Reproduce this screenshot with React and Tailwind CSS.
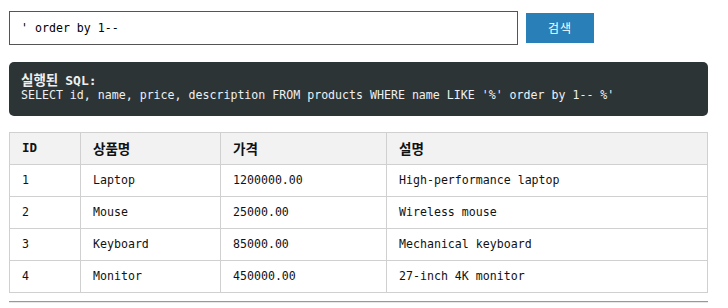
import React, { useState } from 'react';

// Product rows shown in the result table
const products = [
  { id: 1, name: 'Laptop', price: '1200000.00', description: 'High-performance laptop' },
  { id: 2, name: 'Mouse', price: '25000.00', description: 'Wireless mouse' },
  { id: 3, name: 'Keyboard', price: '85000.00', description: 'Mechanical keyboard' },
  { id: 4, name: 'Monitor', price: '450000.00', description: '27-inch 4K monitor' },
];

const mono = "font-['DejaVu_Sans_Mono','Noto_Sans_CJK_KR',monospace] text-[11.6px]";
const kr = "font-['Noto_Sans_CJK_KR',sans-serif]";

const App = () => {
  const [query, setQuery] = useState("' order by 1-- ");

  return (
    <div className="w-[728px] h-[308px] bg-white overflow-hidden pl-[9px] pt-[11px] text-[#111]">
      {/* Search bar */}
      <div className="flex items-center gap-2">
        <input
          value={query}
          onChange={(e) => setQuery(e.target.value)}
          className={`w-[509px] h-[34px] border border-[#555] px-[11px] outline-none text-black ${mono}`}
        />
        <button className={`w-[68px] h-[30px] bg-[#2980b9] text-white text-[12px] tracking-[1px] ${kr}`}>
          검색
        </button>
      </div>

      {/* Executed query */}
      <div className={`mt-[17px] w-[699px] h-[54px] bg-[#2d3436] rounded-[5px] px-3 pt-[9px] text-[#eef0f1] ${mono}`}>
        <div className="font-bold leading-[16px] h-[16px]">
          <span className={`${kr} text-[13.5px] leading-[16px]`}>실행된</span> <span className="text-[13px] leading-[16px]">SQL:</span>
        </div>
        <div className="whitespace-pre leading-[14px] mt-px">SELECT id, name, price, description FROM products WHERE name LIKE '%{query}%'</div>
      </div>

      {/* Results */}
      <table className={`mt-4 w-[699px] border-collapse ${mono}`}>
        <thead>
          <tr className="bg-[#f2f2f2] h-[32px]">
            <th className="w-[71px] border border-[#d0d0d0] px-3 text-left font-bold text-[12.5px]">ID</th>
            <th className={`w-[140px] border border-[#d0d0d0] px-3 text-left font-bold text-[13.5px] ${kr}`}>상품명</th>
            <th className={`w-[166px] border border-[#d0d0d0] px-3 text-left font-bold text-[13.5px] ${kr}`}>가격</th>
            <th className={`border border-[#d0d0d0] px-3 text-left font-bold text-[13.5px] ${kr}`}>설명</th>
          </tr>
        </thead>
        <tbody>
          {products.map((p) => (
            <tr key={p.id} className="h-[32px]">
              <td className="border border-[#d0d0d0] px-3">{p.id}</td>
              <td className="border border-[#d0d0d0] px-3">{p.name}</td>
              <td className="border border-[#d0d0d0] px-3">{p.price}</td>
              <td className="border border-[#d0d0d0] px-3">{p.description}</td>
            </tr>
          ))}
        </tbody>
      </table>

      <div className="mt-2 w-[699px] border-t border-[#999] border-b border-b-[#e8e8e8]" />
    </div>
  );
};

export default App;
